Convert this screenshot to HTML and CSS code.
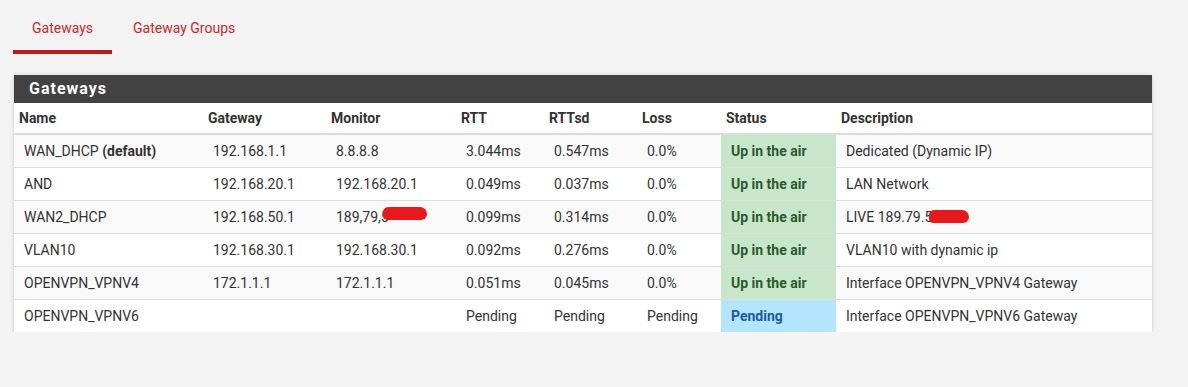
FILE: index.html
```html
<!DOCTYPE html>
<html lang="en">
<head>
    <meta charset="UTF-8">
    <title>Gateways</title>
    <link rel="stylesheet" href="styles.css">
</head>
<body>
    <!-- Tabs -->
    <ul class="tabs">
        <li class="tab active">Gateways</li>
        <li class="tab">Gateway Groups</li>
    </ul>

    <!-- Gateways panel -->
    <div class="panel">
        <h2 class="panel-heading">Gateways</h2>
        <table class="gw-table">
            <colgroup>
                <col style="width:189px"><col style="width:123px"><col style="width:130px"><col style="width:88px">
                <col style="width:93px"><col style="width:84px"><col style="width:115px"><col>
            </colgroup>
            <thead>
                <tr>
                    <th>Name</th><th>Gateway</th><th>Monitor</th><th>RTT</th>
                    <th>RTTsd</th><th>Loss</th><th>Status</th><th>Description</th>
                </tr>
            </thead>
            <tbody>
                <tr>
                    <td>WAN_DHCP <b>(default)</b></td><td>192.168.1.1</td><td>8.8.8.8</td><td>3.044ms</td>
                    <td>0.547ms</td><td>0.0%</td><td class="status up">Up in the air</td><td>Dedicated (Dynamic IP)</td>
                </tr>
                <tr>
                    <td>AND</td><td>192.168.20.1</td><td>192.168.20.1</td><td>0.049ms</td>
                    <td>0.037ms</td><td>0.0%</td><td class="status up">Up in the air</td><td>LAN Network</td>
                </tr>
                <tr>
                    <td>WAN2_DHCP</td><td>192.168.50.1</td>
                    <td><span class="redacted">189,79,5<span class="blot blot-a"></span></span></td>
                    <td>0.099ms</td><td>0.314ms</td><td>0.0%</td><td class="status up">Up in the air</td>
                    <td><span class="redacted">LIVE 189.79.5<span class="blot blot-b"></span></span></td>
                </tr>
                <tr>
                    <td>VLAN10</td><td>192.168.30.1</td><td>192.168.30.1</td><td>0.092ms</td>
                    <td>0.276ms</td><td>0.0%</td><td class="status up">Up in the air</td><td>VLAN10 with dynamic ip</td>
                </tr>
                <tr>
                    <td>OPENVPN_VPNV4</td><td>172.1.1.1</td><td>172.1.1.1</td><td>0.051ms</td>
                    <td>0.045ms</td><td>0.0%</td><td class="status up">Up in the air</td><td>Interface OPENVPN_VPNV4 Gateway</td>
                </tr>
                <tr>
                    <td>OPENVPN_VPNV6</td><td></td><td></td><td>Pending</td>
                    <td>Pending</td><td>Pending</td><td class="status pending">Pending</td><td>Interface OPENVPN_VPNV6 Gateway</td>
                </tr>
            </tbody>
        </table>
    </div>
</body>
</html>
```

FILE: styles.css
```css
body {
    margin: 0;
    padding: 0 14px;
    background: #f3f3f3;
    font-family: Roboto, "Liberation Sans", sans-serif;
    color: #212121;
}

.tabs {
    display: flex;
    gap: 2px;
    list-style: none;
    margin: 0 0 0 -1px;
    padding: 18px 0 0;
}

.tab {
    padding: 2px 19px 14px;
    font-size: 14px;
    line-height: 16px;
    color: #c62828;
    border-bottom: 4px solid transparent;
}

.tab.active {
    border-bottom-color: #b71c1c;
}

.panel {
    margin-top: 21px;
    width: 1138px;
    background: #fff;
    box-shadow: 0 1px 4px rgba(0, 0, 0, 0.18);
}

.panel-heading {
    margin: 0;
    padding: 0 15px;
    height: 28px;
    line-height: 28px;
    background: #424242;
    color: #fff;
    font-size: 16px;
    font-weight: 700;
    letter-spacing: 1px;
}

.gw-table {
    width: 100%;
    border-collapse: collapse;
    table-layout: fixed;
    font-size: 14px;
}

.gw-table th {
    text-align: left;
    font-weight: 700;
    height: 30px;
    padding: 0 5px;
    border-bottom: 2px solid #ddd;
    color: #333;
}

.gw-table td {
    height: 32px;
    padding: 0 10px;
    border-top: 1px solid #ddd;
    white-space: nowrap;
    color: #333;
}

.gw-table tbody tr:first-child td {
    border-top: 0;
}

.gw-table tbody tr:nth-child(odd) {
    background: #f9f9f9;
}

.gw-table td.status {
    font-weight: 700;
}

.gw-table td.up {
    background: #c8e6c9;
    color: #2b5a2c;
}

.gw-table td.pending {
    background: #b3e5fc;
    color: #1e5ba3;
}

/* red scribble over hidden addresses */
.redacted {
    position: relative;
}

.blot {
    position: absolute;
    display: block;
    height: 13px;
    background: #e8191d;
    border-radius: 6px 8px 7px 5px;
}

.blot-a {
    left: 47px;
    top: -2px;
    width: 44px;
}

.blot-b {
    left: 83px;
    top: 1px;
    width: 40px;
}
```
